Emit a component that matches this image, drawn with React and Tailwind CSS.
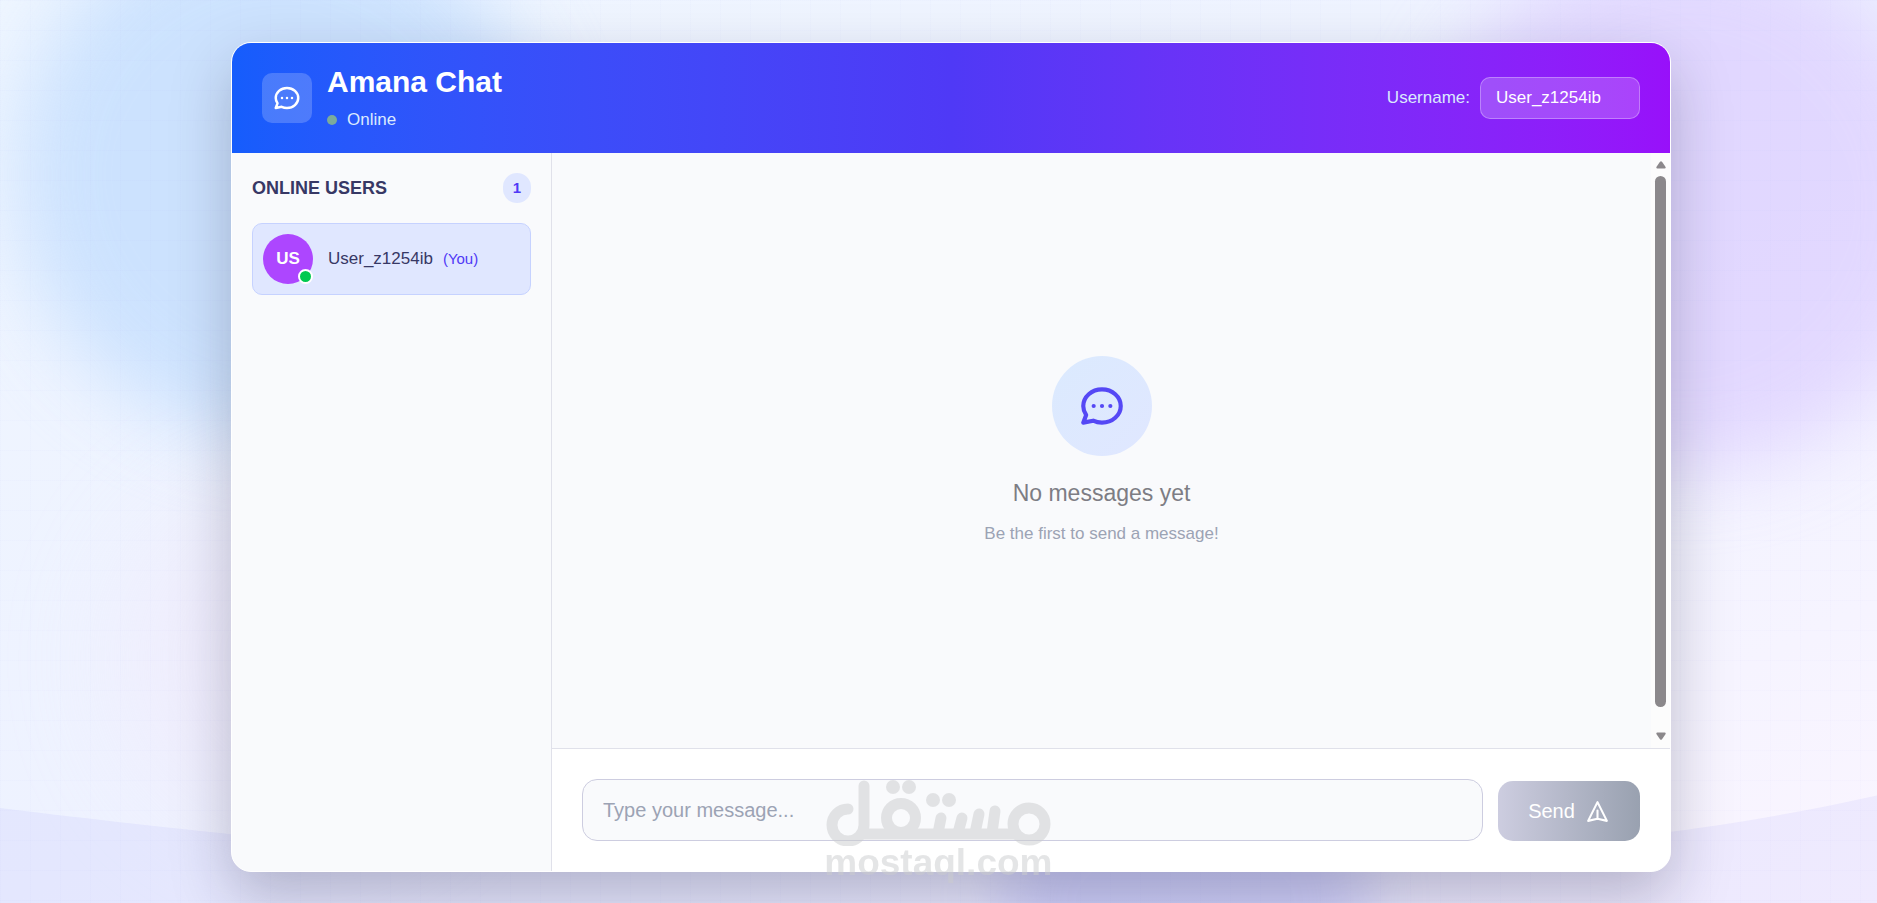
import { useState } from "react";

function ChatIcon({ className }) {
  return (
    <svg viewBox="0 0 24 24" fill="none" stroke="currentColor" strokeWidth="2" strokeLinecap="round" strokeLinejoin="round" className={className} aria-hidden="true">
      <path d="M8 12h.01M12 12h.01M16 12h.01M21 12c0 4.418-4.03 8-9 8a9.863 9.863 0 01-4.255-.949L3 20l1.395-3.72C3.512 15.042 3 13.574 3 12c0-4.418 4.03-8 9-8s9 3.582 9 8z" />
    </svg>
  );
}

function SendIcon() {
  return (
    <svg viewBox="0 0 24 24" fill="none" stroke="currentColor" strokeWidth="2" strokeLinecap="round" strokeLinejoin="round" className="size-[25px]" aria-hidden="true">
      <path d="M12 19l9 2-9-18-9 18 9-2zm0 0v-8" />
    </svg>
  );
}

function Backdrop() {
  return (
    <div className="absolute inset-0 overflow-hidden" aria-hidden="true">
      <div className="absolute -top-[90px] left-[15px] size-[530px] rounded-full bg-[#c4defe] opacity-80 blur-[40px]" />
      <div className="absolute -top-[60px] -right-[75px] size-[530px] rounded-full bg-[#dccdff] opacity-70 blur-[40px]" />
      <div className="absolute top-[480px] left-[120px] size-[360px] rounded-full bg-[#f3e0f8] opacity-30 blur-[60px]" />
      <div className="absolute -bottom-[120px] left-[1000px] h-[240px] w-[370px] rounded-full bg-[#a5a8f5] opacity-35 blur-[30px]" />
      <svg viewBox="0 0 1440 100" preserveAspectRatio="none" className="absolute bottom-0 left-0 h-[125px] w-full">
        <path d="M0 24C360 70 500 70 720 70S1200 70 1440 14V100H0Z" fill="#6366f1" fillOpacity="0.07" />
      </svg>
      <div className="absolute inset-0 bg-[linear-gradient(rgba(99,102,241,0.015)_1px,transparent_1px),linear-gradient(90deg,rgba(99,102,241,0.015)_1px,transparent_1px)] bg-[size:30px_30px]" />
    </div>
  );
}

function Header({ username, onUsername }) {
  return (
    <header className="flex h-[110px] shrink-0 items-center justify-between bg-linear-to-r from-[#155dfc] via-[#4f39f6] to-[#9810fa] px-[30px]">
      <div className="flex items-center gap-[15px]">
        <div className="flex size-[50px] items-center justify-center rounded-[10px] bg-white/20 text-white">
          <ChatIcon className="size-[30px]" />
        </div>
        <div className="pb-[2px]">
          <h1 className="text-[30px] leading-[40px] font-bold text-white">Amana Chat</h1>
          <div className="mt-[5px] flex items-center gap-[10px] text-[17px] leading-[25px] text-[#dbeafe]">
            <span className="size-[10px] rounded-full bg-[#7cab9b]" />
            Online
          </div>
        </div>
      </div>
      <div className="flex items-center gap-[10px]">
        <label htmlFor="username" className="text-[17px] text-[#dbeafe]">Username:</label>
        <input id="username" value={username} onChange={(e) => onUsername(e.target.value)} className="h-[42px] w-[160px] rounded-[10px] border border-white/30 bg-white/20 px-[15px] text-[17px] text-white outline-none" />
      </div>
    </header>
  );
}

function Sidebar({ username }) {
  return (
    <aside className="w-[320px] shrink-0 border-r border-[#e0e1ea] bg-[#f9fafc] p-[20px]">
      <div className="mb-[20px] flex items-center justify-between">
        <h2 className="text-[18px] font-bold text-[#373865]">ONLINE USERS</h2>
        <span className="flex h-[30px] w-[28px] items-center justify-center rounded-full bg-[#e0e7ff] text-[15px] font-bold text-[#4f39f6]">1</span>
      </div>
      <ul>
        <li className="flex items-center gap-[15px] rounded-[10px] border border-[#c6d2ff] bg-[#e0e7ff] p-[10px]">
          <div className="relative flex size-[50px] items-center justify-center rounded-full bg-[#ad46ff] text-[17px] font-bold text-white">
            US
            <span className="absolute right-0 bottom-0 size-[15px] rounded-full border-2 border-white bg-[#00c950]" />
          </div>
          <p className="flex items-baseline gap-[10px] text-[17px] text-[#373865]">
            {username}
            <span className="text-[15px] text-[#4f39f6]">(You)</span>
          </p>
        </li>
      </ul>
    </aside>
  );
}

function ScrollBar() {
  return (
    <div className="flex w-[19px] shrink-0 flex-col items-center bg-[#fcfcfc] py-[8px] text-[#8b888b]" aria-hidden="true">
      <svg viewBox="0 0 10 8" className="h-[8px] w-[10px]" fill="currentColor"><path d="M4 .8Q5-.4 6 .8L9.6 6Q10 7.5 8.6 7.5H1.4Q0 7.5.4 6Z" /></svg>
      <div className="mt-[7px] mb-[25px] w-[11px] flex-1 rounded-full bg-current" />
      <svg viewBox="0 0 10 8" className="h-[8px] w-[10px]" fill="currentColor"><path d="M4 7.2Q5 8.4 6 7.2L9.6 2Q10 .5 8.6 .5H1.4Q0 .5.4 2Z" /></svg>
    </div>
  );
}

function Messages() {
  return (
    <div className="flex min-h-0 flex-1 bg-[#f9fafc]">
      <div className="flex flex-1 flex-col items-center justify-center">
        <div className="flex size-[100px] items-center justify-center rounded-full bg-linear-to-br from-[#dbeafe] to-[#e0e7ff] text-[#5548f5]">
          <ChatIcon className="size-[50px]" />
        </div>
        <p className="mt-[20px] text-[23px] leading-[35px] text-[#7d7d84]">No messages yet</p>
        <p className="mt-[10px] text-[17px] leading-[25px] text-[#9ca3b4]">Be the first to send a message!</p>
      </div>
      <ScrollBar />
    </div>
  );
}

function Composer() {
  return (
    <form className="flex items-end gap-[15px] border-t border-[#e0e1ea] bg-white p-[30px]" onSubmit={(e) => e.preventDefault()}>
      <input aria-label="Message" placeholder="Type your message..." className="h-[62px] min-w-0 flex-1 rounded-[15px] border border-[#cdcde0] bg-[#f9fafc] px-[20px] text-[20px] outline-none placeholder:text-[#9ca3b4]" />
      <button type="submit" className="flex h-[60px] w-[142px] items-center justify-center gap-[10px] rounded-[15px] bg-linear-to-r from-[#cdcde0] to-[#99a1b0] text-[20px] text-white">
        Send
        <SendIcon />
      </button>
    </form>
  );
}

function Watermark() {
  return (
    <div className="pointer-events-none absolute bottom-[23px] left-[44%] w-[225px] text-[#cbccce] opacity-50" aria-hidden="true">
      <svg viewBox="0 0 225 66" className="block w-full" fill="none" stroke="currentColor" strokeWidth="11" strokeLinecap="round">
        <path d="M22 29A16 16 0 1 0 38 45V6M38 54H190" />
        <circle cx="75" cy="38" r="14.5" />
        <circle cx="203" cy="44" r="16" />
        <path d="M112 53L115 38M132 53L136 38M149 53L153 34M166 53L169 31" />
        <g fill="currentColor" stroke="none">
          <circle cx="67" cy="7" r="7" />
          <circle cx="83" cy="7" r="7" />
          <circle cx="107" cy="20" r="7" />
          <circle cx="123" cy="20" r="7" />
        </g>
      </svg>
      <p className="flex justify-center text-[37px] leading-[34px] font-bold">mostaql.com</p>
    </div>
  );
}

export default function App() {
  const [username, setUsername] = useState("User_z1254ib");
  return (
    <div className="relative flex min-h-screen justify-center overflow-hidden bg-linear-to-br from-[#eff6ff] via-[#eef2ff] to-[#faf5ff] pt-[42px] pr-5 pb-[31px] pl-[45px] font-['Liberation_Sans',Arial,sans-serif]">
      <Backdrop />
      <main className="relative flex w-full max-w-[1440px] flex-col overflow-hidden rounded-[20px] border border-white bg-white shadow-[0_25px_60px_rgba(20,20,50,0.25)]">
        <Header username={username} onUsername={setUsername} />
        <div className="flex flex-1">
          <Sidebar username={username} />
          <section className="flex min-w-0 flex-1 flex-col">
            <Messages />
            <Composer />
          </section>
        </div>
      </main>
      <Watermark />
    </div>
  );
}
